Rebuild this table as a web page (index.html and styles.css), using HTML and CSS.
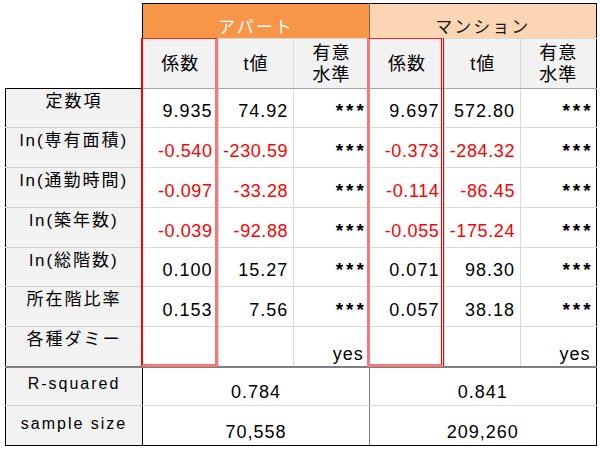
FILE: index.html
```html
<!DOCTYPE html>
<html lang="ja">
<head>
<meta charset="utf-8">
<title>回帰分析結果</title>
<link rel="stylesheet" href="styles.css">
</head>
<body>
<div class="wrap">
  <table class="reg">
    <colgroup>
      <col class="c-label"><col class="c-num"><col class="c-num"><col class="c-num"><col class="c-num"><col class="c-num"><col class="c-num">
    </colgroup>
    <tr class="r-group">
      <td class="blank"></td>
      <th colspan="3" class="grp apt">アパート</th>
      <th colspan="3" class="grp man">マンション</th>
    </tr>
    <tr class="r-sub">
      <td class="blank"></td>
      <th class="sub">係数</th>
      <th class="sub">t値</th>
      <th class="sub sig div">有意<br>水準</th>
      <th class="sub">係数</th>
      <th class="sub">t値</th>
      <th class="sub sig last">有意<br>水準</th>
    </tr>
    <tr class="r-data first">
      <th class="label">定数項</th>
      <td class="num">9.935</td><td class="num">74.92</td><td class="num div"><span class="stars">***</span></td>
      <td class="num">9.697</td><td class="num">572.80</td><td class="num last"><span class="stars">***</span></td>
    </tr>
    <tr class="r-data h40">
      <th class="label">ln(専有面積)</th>
      <td class="num neg">-0.540</td><td class="num neg">-230.59</td><td class="num div"><span class="stars">***</span></td>
      <td class="num neg">-0.373</td><td class="num neg">-284.32</td><td class="num last"><span class="stars">***</span></td>
    </tr>
    <tr class="r-data h40">
      <th class="label">ln(通勤時間)</th>
      <td class="num neg">-0.097</td><td class="num neg">-33.28</td><td class="num div"><span class="stars">***</span></td>
      <td class="num neg">-0.114</td><td class="num neg">-86.45</td><td class="num last"><span class="stars">***</span></td>
    </tr>
    <tr class="r-data h40">
      <th class="label">ln(築年数)</th>
      <td class="num neg">-0.039</td><td class="num neg">-92.88</td><td class="num div"><span class="stars">***</span></td>
      <td class="num neg">-0.055</td><td class="num neg">-175.24</td><td class="num last"><span class="stars">***</span></td>
    </tr>
    <tr class="r-data">
      <th class="label">ln(総階数)</th>
      <td class="num">0.100</td><td class="num">15.27</td><td class="num div"><span class="stars">***</span></td>
      <td class="num">0.071</td><td class="num">98.30</td><td class="num last"><span class="stars">***</span></td>
    </tr>
    <tr class="r-data h40">
      <th class="label">所在階比率</th>
      <td class="num">0.153</td><td class="num">7.56</td><td class="num div"><span class="stars">***</span></td>
      <td class="num">0.057</td><td class="num">38.18</td><td class="num last"><span class="stars">***</span></td>
    </tr>
    <tr class="r-data h40">
      <th class="label">各種ダミー</th>
      <td class="num"></td><td class="num"></td><td class="num div yes">yes</td>
      <td class="num"></td><td class="num"></td><td class="num last yes">yes</td>
    </tr>
    <tr class="r-stat r-top">
      <th class="label lat">R-squared</th>
      <td colspan="3" class="stat div">0.784</td>
      <td colspan="3" class="stat last">0.841</td>
    </tr>
    <tr class="r-stat r-bottom">
      <th class="label lat">sample size</th>
      <td colspan="3" class="stat div">70,558</td>
      <td colspan="3" class="stat last">209,260</td>
    </tr>
  </table>
  <div class="hl hl-apt"></div>
  <div class="hl hl-man"></div>
</div>
</body>
</html>
```
FILE: styles.css
```css
html, body {
  margin: 0;
  padding: 0;
  background: #ffffff;
}

body {
  font-family: "Liberation Sans", "Noto Sans CJK JP", sans-serif;
  color: #000000;
}

.wrap {
  position: relative;
  width: 591px;
  margin: 3px 0 0 5px;
}

.reg {
  border-collapse: collapse;
  table-layout: fixed;
  width: 591px;
}

.c-label { width: 137px; }
.c-num { width: 75.6px; }

.reg th,
.reg td {
  padding: 0;
  font-weight: normal;
  border: 1px solid #d9d9d9;
}

.reg td.blank {
  border: none;
  background: #ffffff;
}

/* group header row */
.r-group { height: 35px; }

.grp {
  font-family: "Noto Sans CJK JP", sans-serif;
  font-size: 17px;
  letter-spacing: 2px;
  line-height: 20px;
  vertical-align: bottom;
  padding-bottom: 2px !important;
  text-align: center;
}

.reg .apt {
  background: #f79646;
  color: #ffffff;
  border-top: 1px solid #000000;
  border-left: 1px solid #000000;
  border-right: 1px solid #7f6a5a;
  border-bottom: 1px solid #d9d9d9;
}

.reg .man {
  background: #fcd5b4;
  color: #1a1a1a;
  border-top: 1px solid #000000;
  border-right: 1px solid #000000;
  border-bottom: 1px solid #d9d9d9;
}

/* sub header row */
.r-sub { height: 50px; }

.sub {
  background: #f2f2f2;
  font-family: "Liberation Sans", "Noto Sans CJK JP", sans-serif;
  font-size: 18px;
  letter-spacing: 1px;
  line-height: 22px;
  text-align: center;
  vertical-align: middle;
}

.reg .sub {
  border-bottom: 1px solid #a6a6a6;
}

/* labels */
.reg .label {
  background: #f2f2f2;
  font-family: "Liberation Sans", "Noto Sans CJK JP", sans-serif;
  font-size: 17px;
  letter-spacing: 2px;
  line-height: 20px;
  text-align: center;
  vertical-align: top;
  padding-top: 3px;
  border-left: 1px solid #000000;
  border-right: 1px solid #000000;
  border-top: 1px solid #d0d0d0;
  border-bottom: 1px solid #d0d0d0;
}

.reg .r-data.first .label {
  border-top: 1px solid #000000;
}

.r-data { height: 39px; }
.r-data.h40 { height: 40px; }

.num {
  font-size: 18px;
  letter-spacing: 1px;
  line-height: 20px;
  text-align: right;
  vertical-align: bottom;
  padding-right: 5px !important;
  padding-bottom: 6px !important;
}

.neg {
  color: #ff0000;
  letter-spacing: 0.6px;
}

.stars {
  display: inline-block;
  font-weight: bold;
  font-size: 19px;
  letter-spacing: 3px;
  margin-right: -3px;
  vertical-align: -5px;
}

.yes {
  padding-bottom: 2px !important;
}

.reg .div { border-right: 1px solid #7f7f7f; }
.reg .last { border-right: 1px solid #000000; }

/* stats rows */
.r-stat.r-top { height: 39px; }
.r-stat.r-bottom { height: 40px; }

.reg .r-top th,
.reg .r-top td {
  border-top: 2px solid #7f7f7f;
}

.reg .lat {
  font-size: 16px;
  letter-spacing: 2px;
  vertical-align: middle;
  padding-top: 0;
  padding-bottom: 4px;
}

.reg .r-bottom th,
.reg .r-bottom td {
  border-bottom: 1px solid #000000;
}

.stat {
  font-size: 18px;
  letter-spacing: 1px;
  line-height: 20px;
  text-align: center;
  vertical-align: bottom;
  padding-bottom: 3px !important;
}

/* red highlight boxes over the coefficient columns */
.hl {
  position: absolute;
  top: 35px;
  width: 77px;
  height: 329px;
  box-sizing: border-box;
  pointer-events: none;
}

.hl-apt {
  left: 136px;
  border-top: 1px solid #ff2020;
  border-left: 2px solid #ff0000;
  border-right: 3px solid #f47a7a;
  border-bottom: 3px solid #f47a7a;
}

.hl-man {
  left: 362px;
  border-top: 1px solid #ff2020;
  border-left: 3px solid #f47a7a;
  border-right: 3px double #ff0000;
  border-bottom: 3px solid #f47a7a;
}
```
